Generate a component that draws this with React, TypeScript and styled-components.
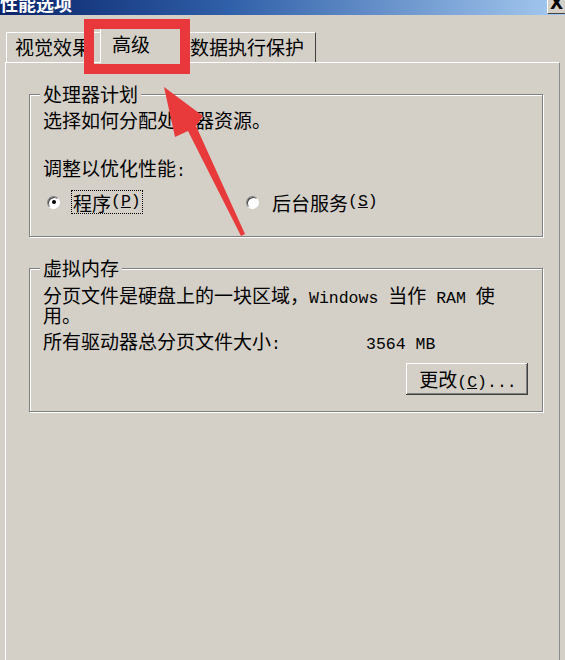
import React from 'react';
import styled, { createGlobalStyle } from 'styled-components';

const GlobalStyle = createGlobalStyle`
  html, body { margin: 0; padding: 0; background: #D4D0C8; overflow: hidden; }
  body { font-family: "Noto Sans CJK SC", "Liberation Sans", sans-serif; }
`;

const Window = styled.div`
  position: relative;
  width: 565px;
  height: 660px;
  overflow: hidden;
  background: #D4D0C8;
  font-family: "Noto Sans CJK SC", "Noto Sans", sans-serif;
  font-size: 19px;
  line-height: 19px;
  color: #000;
`;

const TitleBar = styled.div`
  height: 15px;
  display: flex;
  justify-content: space-between;
  align-items: flex-start;
  overflow: hidden;
  background: linear-gradient(to right, #0A246A 0%, #2f5fa8 40%, #A6CAF0 100%);
`;

const Title = styled.div`
  color: #fff;
  font-weight: 700;
  font-size: 18px;
  line-height: 18px;
  margin-top: -6px;
  white-space: nowrap;
`;

const CloseButton = styled.div`
  width: 18px;
  height: 14px;
  box-sizing: border-box;
  background: #D4D0C8;
  border-left: 1px solid #fff;
  border-bottom: 1px solid #404040;
  display: flex;
  justify-content: center;
  overflow: hidden;
  font: bold 17px/17px "DejaVu Sans", sans-serif;
  color: #000;
  & > span { margin-top: -5px; }
`;

const TabStrip = styled.div`
  display: flex;
  align-items: flex-end;
  height: 34px;
  padding: 13px 0 0 6px;
`;

const Tab = styled.div<{ $active?: boolean; $w: number; $pl: number; $last?: boolean; $ml?: number }>`
  position: relative;
  z-index: ${(p) => (p.$active ? 2 : 1)};
  box-sizing: border-box;
  width: ${(p) => p.$w}px;
  height: ${(p) => (p.$active ? 35 : 30)}px;
  margin-bottom: ${(p) => (p.$active ? -1 : 0)}px;
  margin-left: ${(p) => p.$ml ?? 0}px;
  padding-left: ${(p) => p.$pl}px;
  padding-top: ${(p) => (p.$active ? 5 : 4)}px;
  border-top: 1px solid #fff;
  border-left: ${(p) => (p.$active || p.$pl < 10 ? '1px solid #fff' : 'none')};
  border-right: ${(p) => (p.$last ? '1px solid #404040' : 'none')};
  background: #D4D0C8;
  white-space: nowrap;
`;

const Panel = styled.div`
  margin-left: 5px;
  width: 555px;
  height: 600px;
  box-sizing: border-box;
  border-top: 1px solid #fff;
  border-left: 1px solid #fff;
  border-right: 1px solid #8c8c8c;
  padding: 31px 0 0 23px;
`;

const Group = styled.div<{ $mt?: number; $pb: number }>`
  box-sizing: border-box;
  width: 514px;
  margin-top: ${(p) => p.$mt ?? 0}px;
  border: 1px solid #808080;
  box-shadow: inset 1px 1px 0 #fff, 1px 1px 0 #fff;
  padding: 0 14px ${(p) => p.$pb}px 13px;
`;

const Legend = styled.div`
  width: fit-content;
  margin: -11px 0 0 -3px;
  padding: 0 3px;
  background: #D4D0C8;
  white-space: nowrap;
`;

const Line = styled.div<{ $mt: number }>`
  margin-top: ${(p) => p.$mt}px;
  white-space: nowrap;
`;

const Latin = styled.span`
  font-family: "Liberation Mono", monospace;
  font-size: 16.5px;
  line-height: 12px;
`;

const RadioRow = styled.div`
  display: flex;
  align-items: center;
  height: 24px;
  margin-top: 12px;
  padding-left: 4px;
`;

const RadioOption = styled.div<{ $w?: number }>`
  display: flex;
  align-items: center;
  gap: 11px;
  width: ${(p) => (p.$w ? `${p.$w}px` : 'auto')};
`;

const RadioCircle = styled.span<{ $checked?: boolean }>`
  width: 13px;
  height: 13px;
  box-sizing: border-box;
  border-radius: 50%;
  background: #fff;
  border: 1px solid;
  border-color: #808080 #ffffff #ffffff #808080;
  box-shadow: inset 1px 1px 0 #404040;
  display: flex;
  align-items: center;
  justify-content: center;
  &::after {
    content: '';
    width: 4px;
    height: 4px;
    border-radius: 50%;
    background: #000;
    display: ${(p) => (p.$checked ? 'block' : 'none')};
  }
`;

const RadioLabel = styled.span<{ $focus?: boolean }>`
  display: flex;
  align-items: center;
  height: 22px;
  padding: 0 1px;
  border: 1px dotted ${(p) => (p.$focus ? '#000' : 'transparent')};
  white-space: nowrap;
`;

const InfoRow = styled.div`
  display: flex;
  align-items: baseline;
  margin-top: 7px;
  white-space: nowrap;
`;

const InfoLabel = styled.span`
  width: 323px;
`;

const ButtonRow = styled.div`
  display: flex;
  justify-content: flex-end;
  margin-top: 12px;
`;

const PushButton = styled.button`
  width: 122px;
  height: 32px;
  border: none;
  padding: 0 0 0 2px;
  background: #D4D0C8;
  font: inherit;
  color: #000;
  box-shadow: inset -1px -1px 0 #404040, inset 1px 1px 0 #fff, inset -2px -2px 0 #808080;
  white-space: nowrap;
`;

const Overlay = styled.svg`
  position: absolute;
  left: 0;
  top: 0;
  z-index: 10;
  pointer-events: none;
`;

export default function App() {
  return (
    <>
      <GlobalStyle />
      <Window>
        <TitleBar>
          <Title>性能选项</Title>
          <CloseButton>
            <span>X</span>
          </CloseButton>
        </TitleBar>
        <TabStrip>
          <Tab $w={96} $pl={8}>视觉效果</Tab>
          <Tab $active $w={80} $pl={11} $ml={-2}>高级</Tab>
          <Tab $w={136} $pl={10} $last>数据执行保护</Tab>
        </TabStrip>
        <Panel>
          <Group $pb={22}>
            <Legend>处理器计划</Legend>
            <Line $mt={7}>选择如何分配处理器资源。</Line>
            <Line $mt={29}>调整以优化性能<Latin>:</Latin></Line>
            <RadioRow>
              <RadioOption $w={199}>
                <RadioCircle $checked />
                <RadioLabel $focus>
                  程序<Latin>(<u>P</u>)</Latin>
                </RadioLabel>
              </RadioOption>
              <RadioOption>
                <RadioCircle />
                <RadioLabel>
                  后台服务<Latin>(<u>S</u>)</Latin>
                </RadioLabel>
              </RadioOption>
            </RadioRow>
          </Group>
          <Group $mt={31} $pb={16}>
            <Legend>虚拟内存</Legend>
            <Line $mt={8}>
              分页文件是硬盘上的一块区域，<Latin>Windows </Latin>当作<Latin> RAM </Latin>使
              <br />
              用。
            </Line>
            <InfoRow>
              <InfoLabel>
                所有驱动器总分页文件大小<Latin>:</Latin>
              </InfoLabel>
              <Latin>3564 MB</Latin>
            </InfoRow>
            <ButtonRow>
              <PushButton>
                更改<Latin>(<u>C</u>)...</Latin>
              </PushButton>
            </ButtonRow>
          </Group>
        </Panel>
        <Overlay width={565} height={660} viewBox="0 0 565 660">
          <rect x={89} y={24} width={96} height={45} fill="none" stroke="#E8383B" strokeWidth={10} />
          <polygon
            points="164,87 203,116 196,126 245,234 241,236 188,131 175,137"
            fill="#E8393B"
          />
        </Overlay>
      </Window>
    </>
  );
}
